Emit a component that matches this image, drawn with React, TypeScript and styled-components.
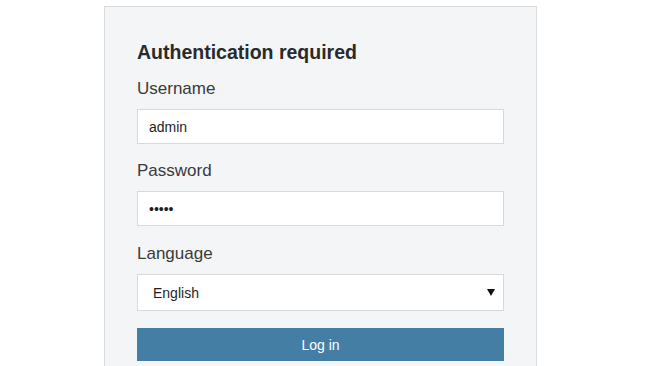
import React from "react";
import styled, { createGlobalStyle } from "styled-components";

const GlobalStyle = createGlobalStyle`
  body {
    margin: 0;
    background: #ffffff;
    font-family: "Liberation Sans", Arial, sans-serif;
  }
`;

const Page = styled.div`
  padding: 6px 0 0 104px;
`;

const Panel = styled.div`
  width: 367px;
  padding: 33px 32px 40px;
  background: #f4f5f7;
  border: 1px solid #dadbdd;
`;

const Title = styled.h2`
  margin: 0 0 15px;
  font-size: 19.5px;
  line-height: 24px;
  font-weight: bold;
  color: #2a2a2a;
`;

const Form = styled.form`
  display: flex;
  flex-direction: column;
`;

const Field = styled.div<{ $space?: number }>`
  display: flex;
  flex-direction: column;
  margin-bottom: ${(p) => p.$space ?? 17}px;
`;

const Label = styled.label`
  font-size: 17px;
  line-height: 20px;
  color: #3a3a3a;
  margin-bottom: 10px;
`;

const Input = styled.input`
  box-sizing: border-box;
  width: 100%;
  height: 35px;
  margin: 0;
  padding: 0 11px;
  border: 1px solid #d9d9db;
  border-radius: 0;
  background: #ffffff;
  font-family: "Liberation Sans", Arial, sans-serif;
  font-size: 14px;
  color: #1e1e1e;
  outline: none;
`;

const SelectWrap = styled.div`
  position: relative;
`;

const Select = styled.select`
  box-sizing: border-box;
  width: 100%;
  height: 37px;
  margin: 0;
  padding: 0 15px;
  border: 1px solid #d9d9db;
  border-radius: 0;
  background: #ffffff;
  appearance: none;
  font-family: "Liberation Sans", Arial, sans-serif;
  font-size: 14px;
  color: #1e1e1e;
  outline: none;
`;

const Arrow = styled.span`
  position: absolute;
  right: 9px;
  top: 15px;
  width: 0;
  height: 0;
  border-left: 4px solid transparent;
  border-right: 4px solid transparent;
  border-top: 7px solid #111111;
  pointer-events: none;
`;

const Button = styled.button`
  height: 33px;
  border: none;
  border-radius: 0;
  background: #457ea4;
  color: #ffffff;
  font-family: "Liberation Sans", Arial, sans-serif;
  font-size: 14px;
  cursor: pointer;
`;

export default function App() {
  return (
    <>
      <GlobalStyle />
      <Page>
        <Panel>
          <Title>Authentication required</Title>
          <Form onSubmit={(e) => e.preventDefault()}>
            <Field>
              <Label htmlFor="username">Username</Label>
              <Input id="username" type="text" defaultValue="admin" />
            </Field>
            <Field $space={18}>
              <Label htmlFor="password">Password</Label>
              <Input id="password" type="password" defaultValue="admin" />
            </Field>
            <Field>
              <Label htmlFor="language">Language</Label>
              <SelectWrap>
                <Select id="language" defaultValue="en">
                  <option value="en">English</option>
                </Select>
                <Arrow />
              </SelectWrap>
            </Field>
            <Button type="submit">Log in</Button>
          </Form>
        </Panel>
      </Page>
    </>
  );
}
